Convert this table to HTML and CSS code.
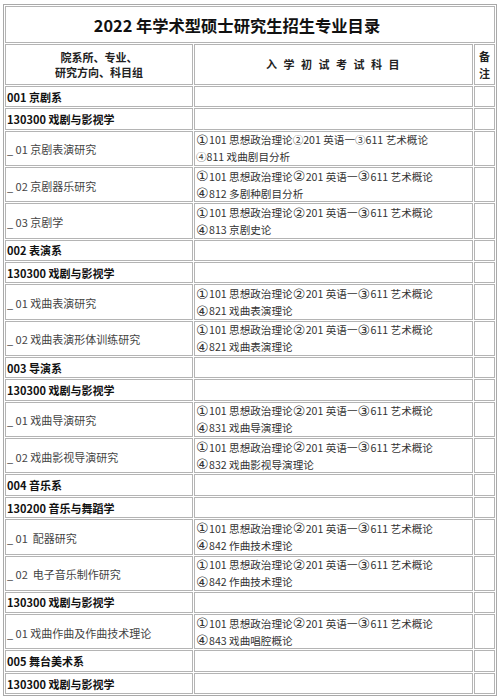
FILE: index.html
```html
<!DOCTYPE html>
<html lang="zh-CN">
<head>
<meta charset="utf-8">
<title>2022 年学术型硕士研究生招生专业目录</title>
<link rel="stylesheet" href="styles.css">
</head>
<body>
<table class="catalog">
  <colgroup>
    <col class="c1"><col class="c2"><col class="c3">
  </colgroup>
  <tr class="title-row"><td colspan="3"><div class="title">2022 年学术型硕士研究生招生专业目录</div></td></tr>
  <tr class="head-row">
    <td><div class="head">院系所、专业、<br>研究方向、科目组</div></td>
    <td><div class="head spaced">入 学 初 试 考 试 科 目</div></td>
    <td><div class="head narrow">备<br>注</div></td>
  </tr>
  <tr class="s"><td><div class="b">001 京剧系</div></td><td></td><td></td></tr>
  <tr class="s"><td><div class="b">130300 戏剧与影视学</div></td><td></td><td></td></tr>
  <tr class="d"><td><div class="dir">_ 01 京剧表演研究</div></td><td><div class="sub"><div class="ln"><span class="n">①</span>101 思想政治理论②201 英语一③611 艺术概论</div><div class="ln">④811 戏曲剧目分析</div></div></td><td></td></tr>
  <tr class="d"><td><div class="dir">_ 02 京剧器乐研究</div></td><td><div class="sub"><div class="ln"><span class="n">①</span>101 思想政治理论<span class="n">②</span>201 英语一<span class="n">③</span>611 艺术概论</div><div class="ln"><span class="n">④</span>812 多剧种剧目分析</div></div></td><td></td></tr>
  <tr class="d"><td><div class="dir">_ 03 京剧学</div></td><td><div class="sub"><div class="ln"><span class="n">①</span>101 思想政治理论<span class="n">②</span>201 英语一<span class="n">③</span>611 艺术概论</div><div class="ln"><span class="n">④</span>813 京剧史论</div></div></td><td></td></tr>
  <tr class="s"><td><div class="b">002 表演系</div></td><td></td><td></td></tr>
  <tr class="s"><td><div class="b">130300 戏剧与影视学</div></td><td></td><td></td></tr>
  <tr class="d"><td><div class="dir">_ 01 戏曲表演研究</div></td><td><div class="sub"><div class="ln"><span class="n">①</span>101 思想政治理论<span class="n">②</span>201 英语一<span class="n">③</span>611 艺术概论</div><div class="ln"><span class="n">④</span>821 戏曲表演理论</div></div></td><td></td></tr>
  <tr class="d"><td><div class="dir">_ 02 戏曲表演形体训练研究</div></td><td><div class="sub"><div class="ln"><span class="n">①</span>101 思想政治理论<span class="n">②</span>201 英语一<span class="n">③</span>611 艺术概论</div><div class="ln"><span class="n">④</span>821 戏曲表演理论</div></div></td><td></td></tr>
  <tr class="s"><td><div class="b">003 导演系</div></td><td></td><td></td></tr>
  <tr class="s"><td><div class="b">130300 戏剧与影视学</div></td><td></td><td></td></tr>
  <tr class="d"><td><div class="dir">_ 01 戏曲导演研究</div></td><td><div class="sub"><div class="ln"><span class="n">①</span>101 思想政治理论<span class="n">②</span>201 英语一<span class="n">③</span>611 艺术概论</div><div class="ln"><span class="n">④</span>831 戏曲导演理论</div></div></td><td></td></tr>
  <tr class="d"><td><div class="dir">_ 02 戏曲影视导演研究</div></td><td><div class="sub"><div class="ln"><span class="n">①</span>101 思想政治理论<span class="n">②</span>201 英语一<span class="n">③</span>611 艺术概论</div><div class="ln"><span class="n">④</span>832 戏曲影视导演理论</div></div></td><td></td></tr>
  <tr class="s"><td><div class="b">004 音乐系</div></td><td></td><td></td></tr>
  <tr class="s"><td><div class="b">130200 音乐与舞蹈学</div></td><td></td><td></td></tr>
  <tr class="d"><td><div class="dir">_ 01&nbsp; 配器研究</div></td><td><div class="sub"><div class="ln"><span class="n">①</span>101 思想政治理论<span class="n">②</span>201 英语一<span class="n">③</span>611 艺术概论</div><div class="ln"><span class="n">④</span>842 作曲技术理论</div></div></td><td></td></tr>
  <tr class="d"><td><div class="dir">_ 02&nbsp; 电子音乐制作研究</div></td><td><div class="sub"><div class="ln"><span class="n">①</span>101 思想政治理论<span class="n">②</span>201 英语一<span class="n">③</span>611 艺术概论</div><div class="ln"><span class="n">④</span>842 作曲技术理论</div></div></td><td></td></tr>
  <tr class="s"><td><div class="b">130300 戏剧与影视学</div></td><td></td><td></td></tr>
  <tr class="d"><td><div class="dir">_ 01 戏曲作曲及作曲技术理论</div></td><td><div class="sub"><div class="ln"><span class="n">①</span>101 思想政治理论<span class="n">②</span>201 英语一<span class="n">③</span>611 艺术概论</div><div class="ln"><span class="n">④</span>843 戏曲唱腔概论</div></div></td><td></td></tr>
  <tr class="s"><td><div class="b">005 舞台美术系</div></td><td></td><td></td></tr>
  <tr class="s"><td><div class="b">130300 戏剧与影视学</div></td><td></td><td></td></tr>
</table>
</body>
</html>
```
FILE: styles.css
```css
html, body {
  margin: 0;
  padding: 0;
  background: #fff;
}
body {
  padding: 4px 3px 0 3px;
  font-family: "Noto Sans CJK SC", "Noto Sans", sans-serif;
  color: #333;
}
.catalog {
  width: 494px;
  table-layout: fixed;
  border-collapse: separate;
  border-spacing: 1px;
  border: 1px solid #a9a9a9;
}
.c1 { width: 188px; }
.c2 { width: 279px; }
.c3 { width: 21px; }
.catalog td {
  border: 1px solid #b4b4b4;
  padding: 0;
  vertical-align: middle;
}
.title {
  height: 35px;
  display: flex;
  align-items: center;
  justify-content: center;
  font-size: 16.3px;
  font-weight: bold;
  color: #111;
  padding-right: 26px;
}
.head {
  height: 39px;
  display: flex;
  align-items: center;
  justify-content: center;
  text-align: center;
  font-size: 11px;
  line-height: 15px;
  font-weight: bold;
  color: #222;
}
.spaced {
  letter-spacing: 1.5px;
  word-spacing: 1px;
}
.narrow {
  font-size: 11px;
  line-height: 17px;
}
.b, .dir {
  display: flex;
  align-items: center;
  padding-left: 1px;
  font-size: 11px;
  white-space: nowrap;
}
.s td { height: 19px; }
.b {
  height: 19.4px;
  font-weight: bold;
  color: #111;
}
.d td { height: 33px; }
.dir {
  height: 33.3px;
  color: #444;
  padding-top: 2px;
  box-sizing: border-box;
}
.sub {
  height: 33.3px;
  display: flex;
  flex-direction: column;
  justify-content: center;
  gap: 2px;
  padding-left: 1px;
  box-sizing: border-box;
  font-size: 10.6px;
  color: #333;
  white-space: nowrap;
}
.ln {
  height: 15px;
  line-height: 15px;
  display: flex;
  align-items: center;
}
.n {
  font-family: "DejaVu Sans", "Noto Sans CJK SC", sans-serif;
  font-size: 14px;
  line-height: 14px;
  margin-right: 0.5px;
}
```
